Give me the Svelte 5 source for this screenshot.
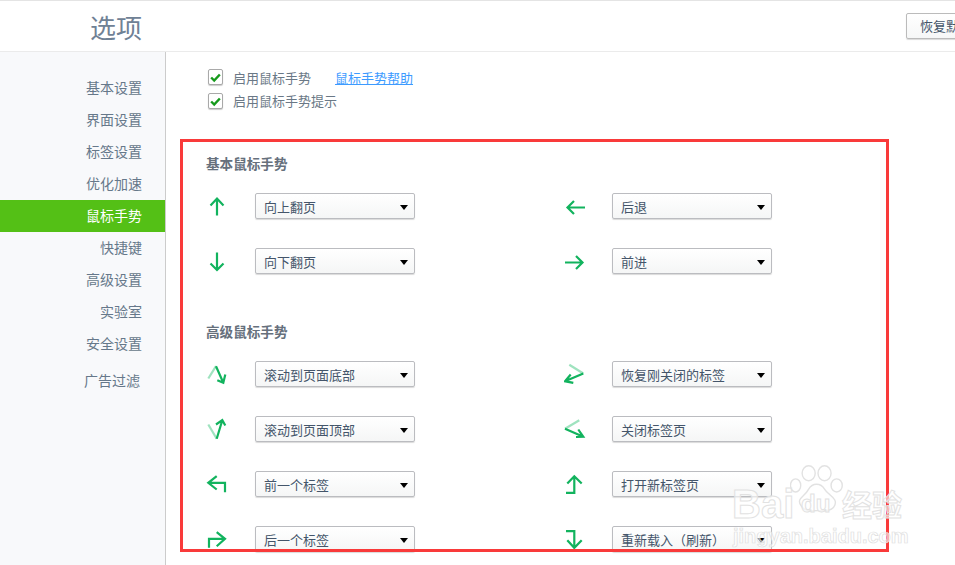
<script>
  const navItems = ['基本设置', '界面设置', '标签设置', '优化加速', '鼠标手势', '快捷键', '高级设置', '实验室', '安全设置'];

  // each gesture: faded first stroke (optional), main strokes
  const icons = {
    up: { main: 'M12 21.5V4.5M5.5 11.5L12 4.5L18.5 11.5' },
    down: { main: 'M12 3.5V21M5.5 14.5L12 21L18.5 14.5' },
    left: { main: 'M3.5 13.5H21M10 7L3.5 13.5L10 20' },
    right: { main: 'M1 13.5H18.5M12 7L18.5 13.5L12 20' },
    upDown: { fade: 'M3.3 16.5L11 4.2', main: 'M11 4.2L18.3 20.8M12.3 18.2L18.3 20.8L20.3 12.5' },
    downUp: { fade: 'M3.3 7.5L11.7 21.8', main: 'M11.7 21.8L17.3 3.2M11 7.5L17.3 3.2L20.3 8.5' },
    leftDown: { main: 'M20 20.2V10.8H3.3M11.7 4.2L3.3 10.8L11.7 17.5' },
    rightDown: { main: 'M4 20.8V11.8H20M11.7 5.2L20 11.8L11.7 19.2' },
    rightLeft: { fade: 'M5.3 2.8L19.3 11.5', main: 'M19.3 11.5L1 19.2M6.7 12.5L1 19.2L9.3 20.8' },
    leftRight: { fade: 'M15.3 3.2L1 11.8', main: 'M1 11.8L19.3 19.8M14.3 12.5L19.3 19.8L12 20' },
    upLeft: { main: 'M2 20.8H10.3V4.2M3.3 11.5L10.3 4.2L17.7 11.5' },
    downRight: { main: 'M2 4.2H10.3V20.8M3.3 13.2L10.3 20.8L17.7 13.2' }
  };

  const basic = [
    ['up', '向上翻页', 'left', '后退'],
    ['down', '向下翻页', 'right', '前进']
  ];
  const advanced = [
    ['upDown', '滚动到页面底部', 'rightLeft', '恢复刚关闭的标签'],
    ['downUp', '滚动到页面顶部', 'leftRight', '关闭标签页'],
    ['leftDown', '前一个标签', 'upLeft', '打开新标签页'],
    ['rightDown', '后一个标签', 'downRight', '重新载入（刷新）']
  ];
  const sections = [
    { title: '基本鼠标手势', rows: basic },
    { title: '高级鼠标手势', rows: advanced }
  ];
</script>

{#snippet gesture(name)}
  <svg class="gesture" viewBox="0 0 24 24" width="24" height="24" fill="none">
    {#if icons[name].fade}
      <path d={icons[name].fade} stroke="#9fe3bf" stroke-width="2.2" />
    {/if}
    <path d={icons[name].main} stroke="#12b35e" stroke-width="2.2" />
  </svg>
{/snippet}

{#snippet dropdown(label)}
  <div class="select-wrap">
    <select>
      <option>{label}</option>
    </select>
    <span class="caret"></span>
  </div>
{/snippet}

{#snippet check()}
  <span class="check">
    <svg viewBox="0 0 15 16" width="14" height="15" fill="none">
      <path d="M2.5 8L6 11.5L12.5 4.5" stroke="#169a1c" stroke-width="2.8" />
    </svg>
  </span>
{/snippet}

<div class="page">
  <header class="top">
    <h1>选项</h1>
    <button class="reset">恢复默认设置</button>
  </header>

  <div class="body">
    <nav class="side">
      {#each navItems as item}
        <a href="#top" class:active={item === '鼠标手势'}>{item}</a>
      {/each}
      <a href="#top" class="adblock">广告过滤</a>
    </nav>

    <main class="content">
      <div class="option">
        {@render check()}
        <span>启用鼠标手势</span>
        <a href="#top" class="help">鼠标手势帮助</a>
      </div>
      <div class="option">
        {@render check()}
        <span class="lift">启用鼠标手势提示</span>
      </div>

      {#each sections as section}
        <section class="group">
          <h2>{section.title}</h2>
          <div class="grid">
            {#each section.rows as row}
              {@render gesture(row[0])}
              {@render dropdown(row[1])}
              <span></span>
              {@render gesture(row[2])}
              {@render dropdown(row[3])}
            {/each}
          </div>
        </section>
      {/each}
    </main>
  </div>

  <!-- annotation drawn on top of the screenshot -->
  <div class="redbox"></div>

  <div class="watermark">
    <span class="wm-bai">Bai</span>
    <svg class="wm-paw" viewBox="0 0 60 56" width="56" height="56" fill="none" stroke="#e2e2e2" stroke-width="1.5">
      <ellipse cx="20" cy="9" rx="7" ry="8" />
      <ellipse cx="37" cy="9" rx="7" ry="8" />
      <ellipse cx="6" cy="22" rx="5.5" ry="7" />
      <ellipse cx="50" cy="22" rx="6" ry="7" />
      <path d="M12 44C6 36 16 34 20 26C24 19 33 19 37 26C41 33 53 36 47 45C43 51 34 49 29 49C23 49 16 51 12 44Z" />
    </svg>
    <span class="wm-du">du</span>
    <span class="wm-jy">经验</span>
    <span class="wm-url">jingyan.baidu.com</span>
  </div>
</div>

<style>
  :global(body) {
    margin: 0;
    background: #fff;
  }

  .page {
    position: relative;
    width: 955px;
    height: 565px;
    overflow: hidden;
    display: flex;
    flex-direction: column;
    font-family: "Noto Sans CJK SC", "Liberation Sans", sans-serif;
    font-size: 13px;
    color: #5f6f7f;
  }

  .top {
    flex: none;
    box-sizing: border-box;
    width: 1032px;
    height: 52px;
    padding: 0 20px 0 90px;
    display: flex;
    align-items: center;
    justify-content: space-between;
    border-top: 1px solid #e4e4e4;
    border-bottom: 1px solid #ebebeb;
  }

  h1 {
    margin: 0;
    font-size: 26px;
    font-weight: 400;
    color: #6f8195;
  }

  .reset {
    box-sizing: border-box;
    width: 106px;
    height: 26px;
    margin-top: -1px;
    padding: 0 0 1px 13px;
    text-align: left;
    font: inherit;
    color: #44556a;
    border: 1px solid #bbb;
    border-radius: 2px;
    background: linear-gradient(#fff, #f6f7f7);
    box-shadow: 0 1px 1px rgba(0, 0, 0, 0.15);
  }

  .body {
    flex: 1;
    display: flex;
    min-height: 0;
  }

  .side {
    flex: none;
    box-sizing: border-box;
    width: 166px;
    padding-top: 20px;
    background: #f8f9fb;
    border-right: 1px solid #ccc;
    display: flex;
    flex-direction: column;
  }

  .side a {
    height: 32px;
    line-height: 30px;
    padding-right: 23px;
    text-align: right;
    font-size: 14px;
    color: #66788a;
    text-decoration: none;
  }

  .side a.active {
    background: #54c016;
    color: #fff;
  }

  .side a.adblock {
    margin-top: 5px;
    padding-right: 25px;
  }

  .content {
    flex: 1;
    padding: 13px 0 0 42px;
  }

  .option {
    height: 24px;
    display: flex;
    align-items: center;
    color: #6a7886;
  }

  .lift {
    padding-bottom: 2px;
  }

  .check {
    box-sizing: border-box;
    width: 15px;
    height: 16px;
    margin-right: 10px;
    display: flex;
    align-items: center;
    justify-content: center;
    background: #fff;
    border: 1px solid #a9a9a9;
    border-radius: 2px;
    box-shadow: 0 1px 1px rgba(0, 0, 0, 0.2);
  }

  .help {
    margin-left: 25px;
    margin-right: -1px;
    transform: translateX(-1px);
    color: #3d9bff;
    text-decoration: underline;
  }

  .group {
    margin: 41px 0 0 -3px;
  }

  .group + .group {
    margin-top: 48px;
  }

  h2 {
    margin: 0 0 21px 1px;
    font-size: 13.6px;
    line-height: 18px;
    font-weight: 700;
    color: #66707c;
  }

  .grid {
    display: grid;
    grid-template-columns: 50px 160px 149px 48px 160px;
    grid-auto-rows: 26px;
    row-gap: 29px;
    align-items: center;
  }

  .gesture {
    display: block;
  }

  .select-wrap {
    position: relative;
    height: 26px;
  }

  select {
    display: block;
    box-sizing: border-box;
    width: 100%;
    height: 26px;
    padding: 0 22px 0 8px;
    appearance: none;
    font: inherit;
    color: #44556a;
    border: 1px solid #bbbcc0;
    border-radius: 2px;
    background: linear-gradient(#fff, #f5f6f6);
    box-shadow: 0 1px 1px rgba(0, 0, 0, 0.15);
  }

  .caret {
    position: absolute;
    right: 7px;
    top: 12px;
    width: 0;
    height: 0;
    border-left: 4px solid transparent;
    border-right: 4px solid transparent;
    border-top: 5px solid #000;
    pointer-events: none;
  }

  .redbox {
    position: absolute;
    left: 180px;
    top: 139px;
    width: 703px;
    height: 407px;
    border: 3px solid #f93a3a;
    pointer-events: none;
  }

  .watermark {
    position: absolute;
    left: 730px;
    top: 460px;
    width: 180px;
    height: 85px;
    pointer-events: none;
    font-family: "Liberation Sans", sans-serif;
    color: rgba(255, 255, 255, 0.6);
    -webkit-text-stroke: 1px #e2e2e2;
  }

  .watermark span {
    position: absolute;
    white-space: nowrap;
    font-weight: 700;
  }

  .wm-bai {
    left: 2px;
    top: 22px;
    font-size: 40px;
    line-height: 44px;
  }

  .wm-paw {
    position: absolute;
    left: 60px;
    top: 3px;
  }

  .wm-du {
    left: 71px;
    top: 30px;
    font-size: 24px;
    line-height: 28px;
  }

  .wm-jy {
    left: 112px;
    top: 26px;
    font-family: "Noto Sans CJK SC", sans-serif;
    font-size: 30px;
    line-height: 34px;
  }

  .wm-url {
    left: 3px;
    top: 65px;
    font-size: 20px;
    line-height: 22px;
    -webkit-text-stroke: 0.7px #dedede;
  }
</style>
